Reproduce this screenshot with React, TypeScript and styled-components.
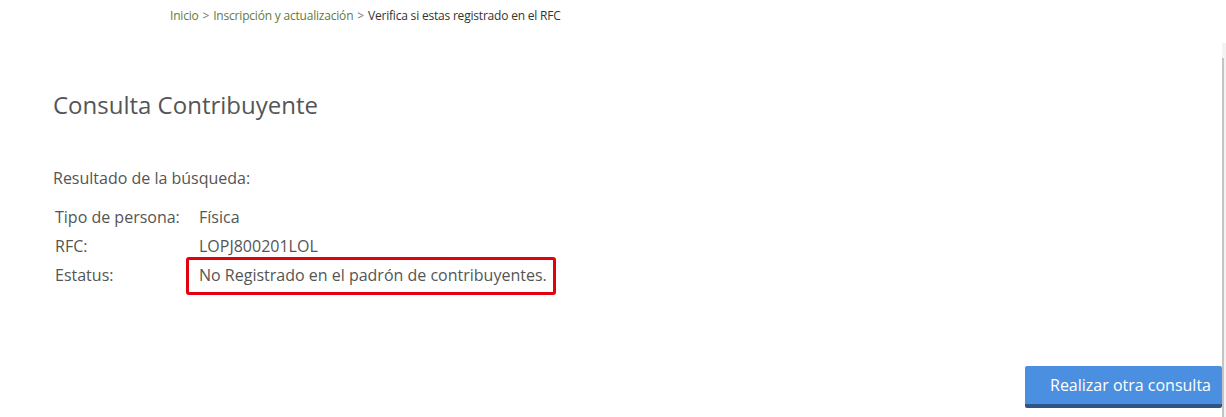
import styled, { createGlobalStyle } from 'styled-components';

const GlobalStyle = createGlobalStyle`
  html, body {
    margin: 0;
    padding: 0;
    background: #ffffff;
  }
  body {
    font-family: "Open Sans", "Noto Sans", "Liberation Sans", sans-serif;
    color: #555555;
  }
`;

const Page = styled.div`
  display: flex;
  width: 1226px;
  height: 417px;
  overflow: hidden;
`;

const Main = styled.div`
  flex: 1;
  display: flex;
  flex-direction: column;
`;

const Rail = styled.div`
  width: 4px;
  margin-top: 43px;
  background: #f3f3f3;
  display: flex;
  justify-content: flex-start;
  padding-top: 15px;
`;

const RailLine = styled.div`
  width: 2px;
  background: #c4c4c4;
  height: 100%;
`;

const Breadcrumb = styled.nav`
  padding: 7px 0 0 170px;
  font-size: 12px;
  line-height: 17px;
  letter-spacing: -0.2px;
  color: #333333;
`;

const Crumb = styled.a`
  color: #5f7a3e;
  text-decoration: none;
`;

const Sep = styled.span`
  color: #777777;
  margin: 0 4px;
`;

const Content = styled.section`
  padding: 0 0 0 53px;
  flex: 1;
  display: flex;
  flex-direction: column;
`;

const Title = styled.h1`
  margin: 66px 0 0;
  font-size: 24px;
  font-weight: 400;
  line-height: 30px;
  color: #555555;
`;

const Subtitle = styled.p`
  margin: 47px 0 0;
  font-size: 16px;
  line-height: 22px;
  color: #555555;
`;

const Table = styled.div`
  margin: 17px 0 0 2px;
  display: grid;
  grid-template-columns: 144px auto;
  row-gap: 7px;
  justify-content: start;
`;

const Label = styled.div`
  font-size: 16px;
  line-height: 22px;
  color: #555555;
`;

const Value = styled.div<{ $highlight?: boolean }>`
  font-size: 16px;
  line-height: 22px;
  color: #555555;
  ${p => p.$highlight && `
    box-sizing: border-box;
    margin: -7px 0 -9px -13px;
    padding: 4px 0 6px 10px;
    width: 370px;
    border: 3px solid #e3000f;
    border-radius: 3px;
  `}
`;

const Actions = styled.div`
  margin-top: auto;
  display: flex;
  justify-content: flex-end;
  padding-bottom: 9px;
`;

const Button = styled.button`
  width: 197px;
  height: 42px;
  padding: 0 0 0 14px;
  border: none;
  border-bottom: 4px solid #2f5584;
  border-radius: 2px;
  background: #4a8fe0;
  color: #ffffff;
  font-family: "Open Sans", "Noto Sans", sans-serif;
  font-size: 16px;
  text-align: center;
  cursor: pointer;
`;

export default function App() {
  return (
    <>
      <GlobalStyle />
      <Page>
        <Main>
          <Breadcrumb>
            <Crumb href="#">Inicio</Crumb>
            <Sep>&gt;</Sep>
            <Crumb href="#">Inscripción y actualización</Crumb>
            <Sep>&gt;</Sep>
            Verifica si estas registrado en el RFC
          </Breadcrumb>
          <Content>
            <Title>Consulta Contribuyente</Title>
            <Subtitle>Resultado de la búsqueda:</Subtitle>
            <Table>
              <Label>Tipo de persona:</Label>
              <Value>Física</Value>
              <Label>RFC:</Label>
              <Value>LOPJ800201LOL</Value>
              <Label>Estatus:</Label>
              <Value $highlight>No Registrado en el padrón de contribuyentes.</Value>
            </Table>
            <Actions>
              <Button>Realizar otra consulta</Button>
            </Actions>
          </Content>
        </Main>
        <Rail>
          <RailLine />
        </Rail>
      </Page>
    </>
  );
}
